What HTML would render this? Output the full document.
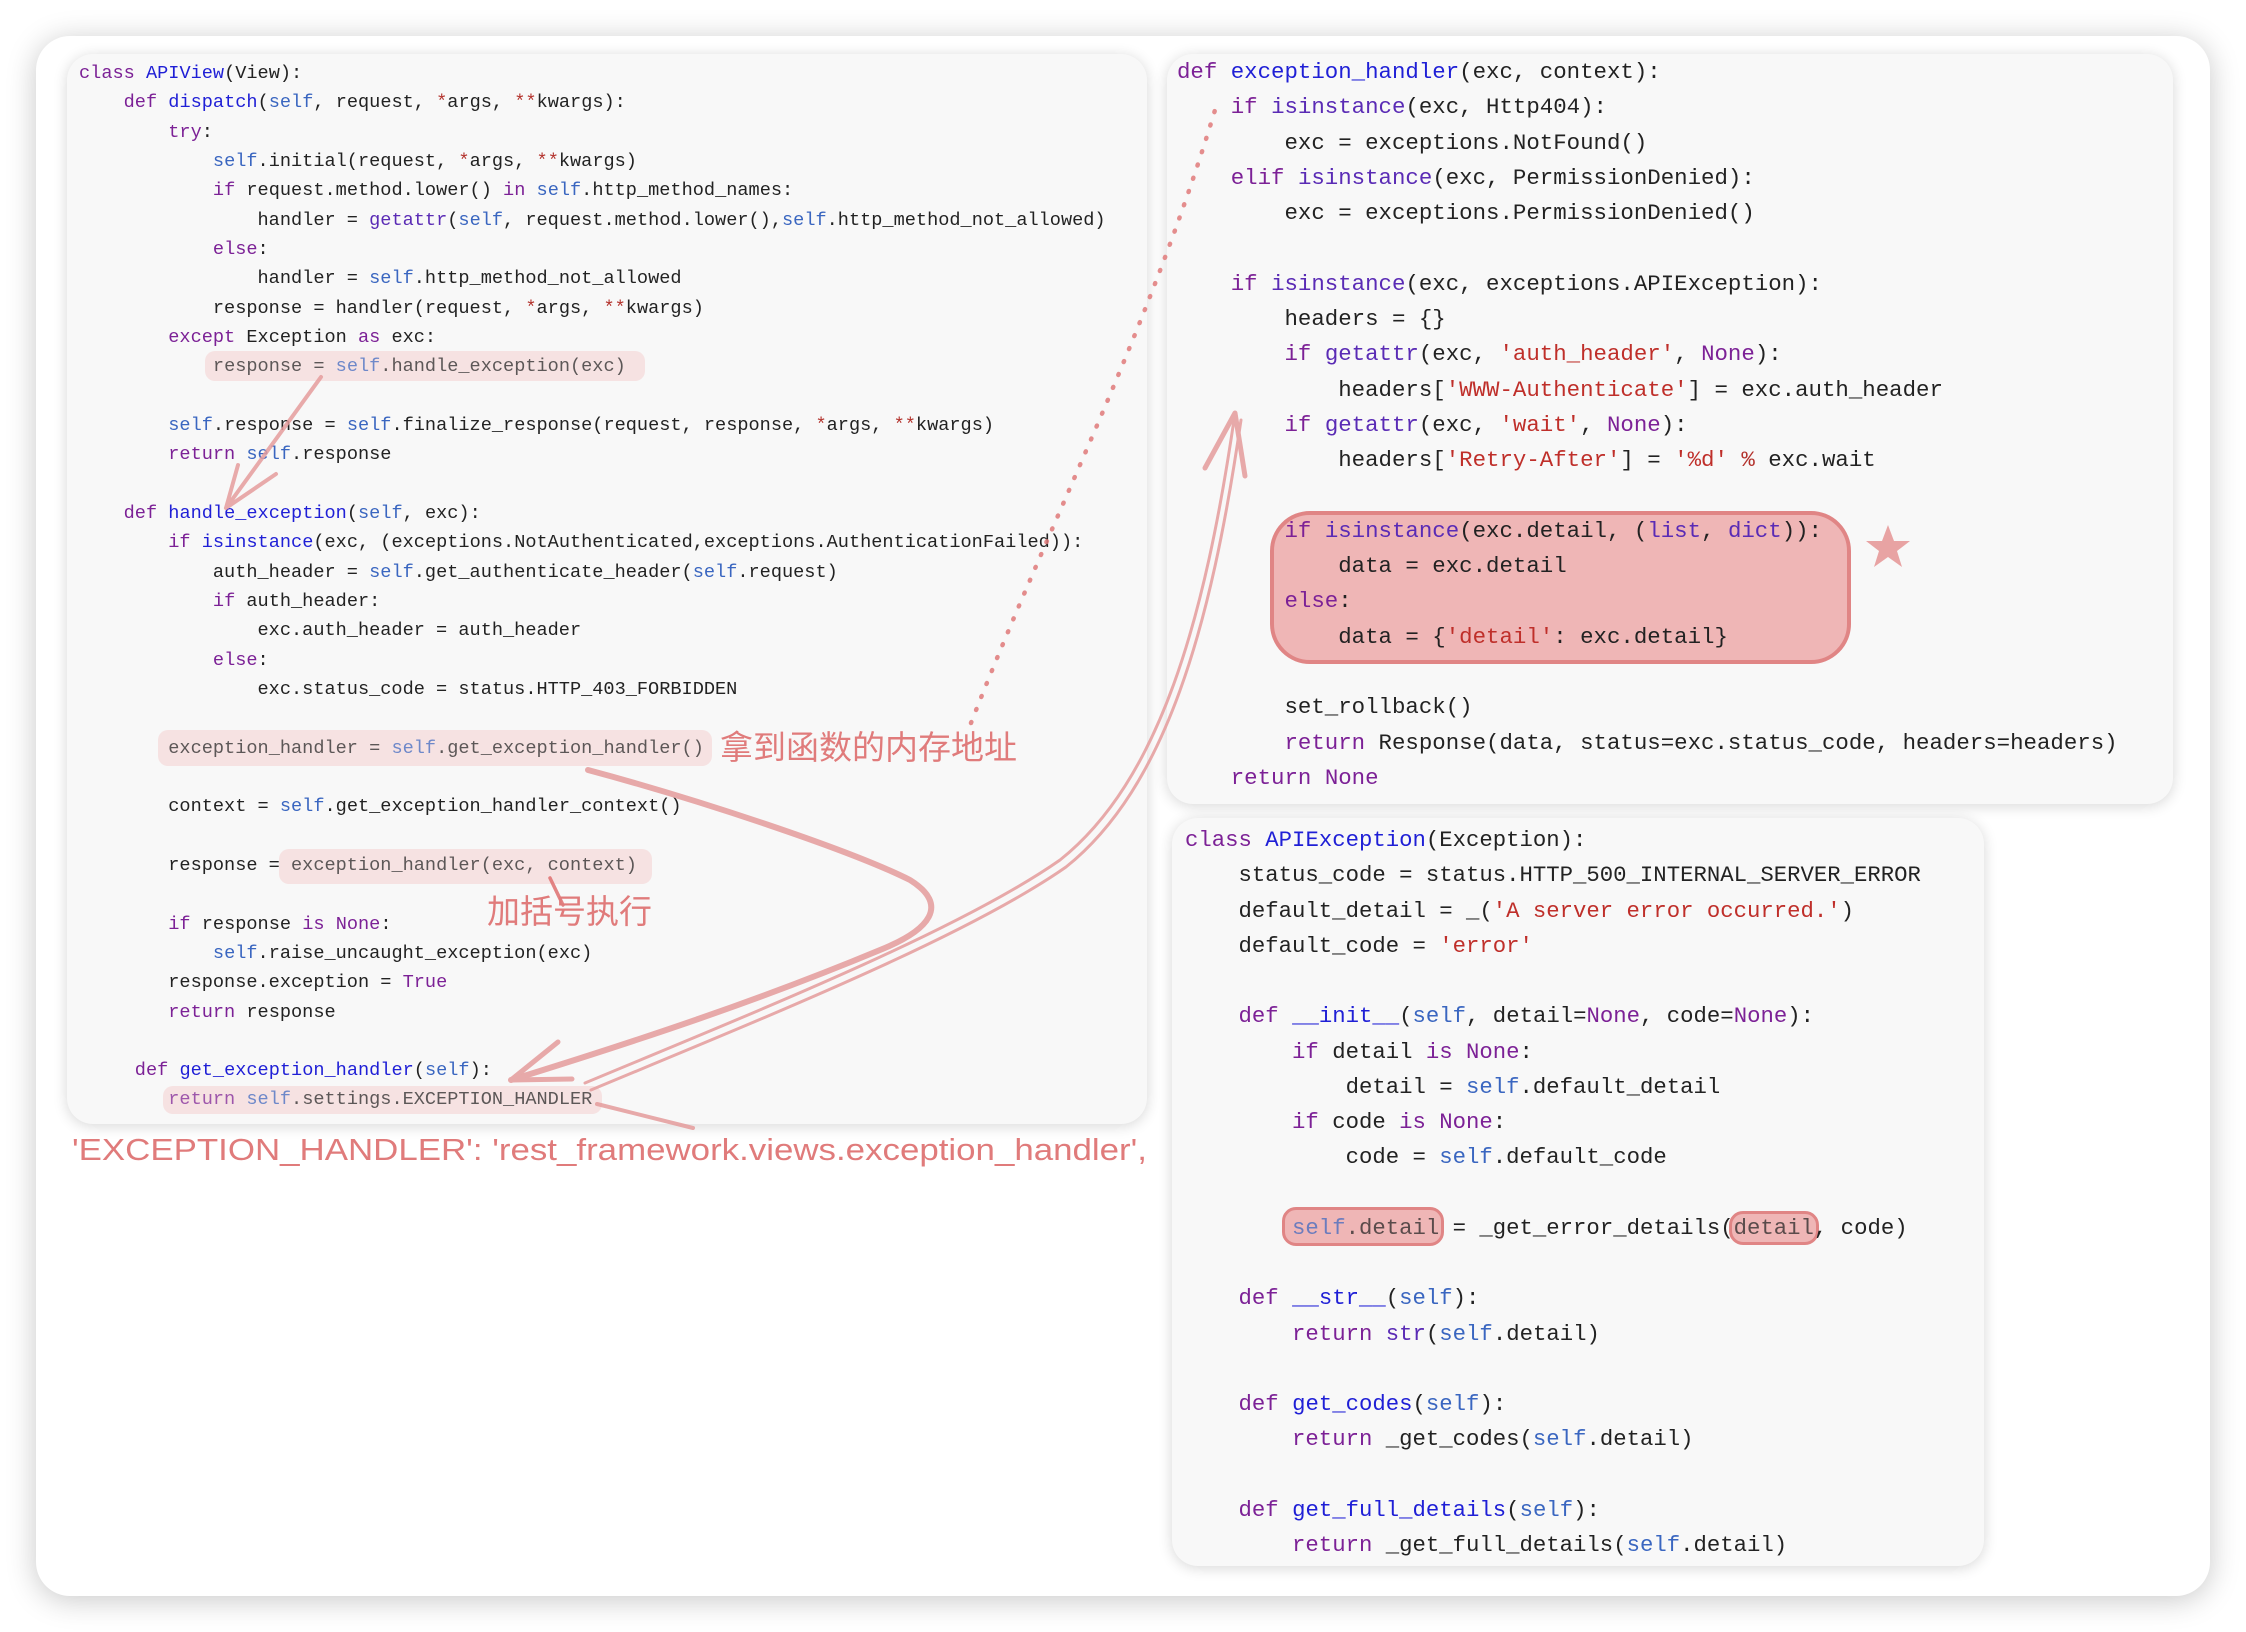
<!DOCTYPE html>
<html><head><meta charset="utf-8">
<style>
html,body{margin:0;padding:0;width:2246px;height:1632px;background:#fff;overflow:hidden}
.card{position:absolute;left:36px;top:36px;width:2174px;height:1560px;background:#fff;border-radius:34px;box-shadow:0 4px 30px rgba(0,0,0,.22)}
.panel{position:absolute;background:#f8f8f8;border-radius:26px;box-shadow:0 2px 14px rgba(0,0,0,.16)}
pre{position:absolute;margin:0;font-family:"Liberation Mono",monospace;color:#222;white-space:pre}
.L{left:79px;top:59px;font-size:18.6px;line-height:29.33px}
.R{left:1177px;top:55px;font-size:22.4px;line-height:35.3px}
.B{left:1185px;top:823px;font-size:22.3px;line-height:35.25px}
.k{color:#7c2196}.f{color:#1f1fd6}.b{color:#5a2bb5}.s{color:#3a66c0}.t{color:#bf2f2a}.o{color:#b3322c}
.dim{opacity:.72}
.hl{position:absolute;background:#f6e2e2;border-radius:10px}
.box{position:absolute;background:#efb6b6;border:3px solid #e08585;border-radius:14px;box-sizing:border-box}
</style></head><body>
<div class="card"></div>
<div class="panel" style="left:67px;top:54px;width:1080px;height:1070px"></div>
<div class="panel" style="left:1167px;top:54px;width:1006px;height:750px"></div>
<div class="panel" style="left:1172px;top:818px;width:812px;height:748px"></div>

<div class="hl" style="left:205px;top:351px;width:440px;height:30px"></div>
<div class="hl" style="left:158px;top:730px;width:554px;height:36px"></div>
<div class="hl" style="left:279px;top:849px;width:373px;height:35px"></div>
<div class="hl" style="left:163px;top:1086px;width:439px;height:28px"></div>

<div class="box" style="left:1270px;top:511px;width:581px;height:153px;border-radius:40px;border-width:4px"></div>
<div class="box" style="left:1282px;top:1207px;width:162px;height:39px"></div>
<div class="box" style="left:1729px;top:1211px;width:90px;height:34px"></div>

<pre class="L"><span class="k">class</span> <span class="f">APIView</span>(View):
    <span class="k">def</span> <span class="f">dispatch</span>(<span class="s">self</span>, request, <span class="o">*</span>args, <span class="o">**</span>kwargs):
        <span class="k">try</span>:
            <span class="s">self</span>.initial(request, <span class="o">*</span>args, <span class="o">**</span>kwargs)
            <span class="k">if</span> request.method.lower() <span class="k">in</span> <span class="s">self</span>.http_method_names:
                handler = <span class="b">getattr</span>(<span class="s">self</span>, request.method.lower(),<span class="s">self</span>.http_method_not_allowed)
            <span class="k">else</span>:
                handler = <span class="s">self</span>.http_method_not_allowed
            response = handler(request, <span class="o">*</span>args, <span class="o">**</span>kwargs)
        <span class="k">except</span> Exception <span class="k">as</span> exc:
            <span class="dim">response = <span class="s">self</span>.handle_exception(exc)</span>

        <span class="s">self</span>.response = <span class="s">self</span>.finalize_response(request, response, <span class="o">*</span>args, <span class="o">**</span>kwargs)
        <span class="k">return</span> <span class="s">self</span>.response

    <span class="k">def</span> <span class="f">handle_exception</span>(<span class="s">self</span>, exc):
        <span class="k">if</span> <span class="f">isinstance</span>(exc, (exceptions.NotAuthenticated,exceptions.AuthenticationFailed)):
            auth_header = <span class="s">self</span>.get_authenticate_header(<span class="s">self</span>.request)
            <span class="k">if</span> auth_header:
                exc.auth_header = auth_header
            <span class="k">else</span>:
                exc.status_code = status.HTTP_403_FORBIDDEN

        <span class="dim">exception_handler = <span class="s">self</span>.get_exception_handler()</span>

        context = <span class="s">self</span>.get_exception_handler_context()

        response = <span class="dim">exception_handler(exc, context)</span>

        <span class="k">if</span> response <span class="k">is</span> <span class="k">None</span>:
            <span class="s">self</span>.raise_uncaught_exception(exc)
        response.exception = <span class="k">True</span>
        <span class="k">return</span> response

     <span class="k">def</span> <span class="f">get_exception_handler</span>(<span class="s">self</span>):
        <span class="dim"><span class="k">return</span> <span class="s">self</span>.settings.EXCEPTION_HANDLER</span></pre>

<pre class="R"><span class="k">def</span> <span class="f">exception_handler</span>(exc, context):
    <span class="k">if</span> <span class="b">isinstance</span>(exc, Http404):
        exc = exceptions.NotFound()
    <span class="k">elif</span> <span class="b">isinstance</span>(exc, PermissionDenied):
        exc = exceptions.PermissionDenied()

    <span class="k">if</span> <span class="b">isinstance</span>(exc, exceptions.APIException):
        headers = {}
        <span class="k">if</span> <span class="b">getattr</span>(exc, <span class="t">'auth_header'</span>, <span class="k">None</span>):
            headers[<span class="t">'WWW-Authenticate'</span>] = exc.auth_header
        <span class="k">if</span> <span class="b">getattr</span>(exc, <span class="t">'wait'</span>, <span class="k">None</span>):
            headers[<span class="t">'Retry-After'</span>] = <span class="t">'%d'</span> <span class="o">%</span> exc.wait

        <span class="k">if</span> <span class="b">isinstance</span>(exc.detail, (<span class="b">list</span>, <span class="b">dict</span>)):
            data = exc.detail
        <span class="k">else</span>:
            data = {<span class="t">'detail'</span>: exc.detail}

        set_rollback()
        <span class="k">return</span> Response(data, status=exc.status_code, headers=headers)
    <span class="k">return</span> <span class="k">None</span></pre>

<pre class="B"><span class="k">class</span> <span class="f">APIException</span>(Exception):
    status_code = status.HTTP_500_INTERNAL_SERVER_ERROR
    default_detail = _(<span class="t">'A server error occurred.'</span>)
    default_code = <span class="t">'error'</span>

    <span class="k">def</span> <span class="f">__init__</span>(<span class="s">self</span>, detail=<span class="k">None</span>, code=<span class="k">None</span>):
        <span class="k">if</span> detail <span class="k">is</span> <span class="k">None</span>:
            detail = <span class="s">self</span>.default_detail
        <span class="k">if</span> code <span class="k">is</span> <span class="k">None</span>:
            code = <span class="s">self</span>.default_code

        <span class="dim"><span class="s">self</span>.detail</span> = _get_error_details(<span class="dim">detail</span>, code)

    <span class="k">def</span> <span class="f">__str__</span>(<span class="s">self</span>):
        <span class="k">return</span> <span class="b">str</span>(<span class="s">self</span>.detail)

    <span class="k">def</span> <span class="f">get_codes</span>(<span class="s">self</span>):
        <span class="k">return</span> _get_codes(<span class="s">self</span>.detail)

    <span class="k">def</span> <span class="f">get_full_details</span>(<span class="s">self</span>):
        <span class="k">return</span> _get_full_details(<span class="s">self</span>.detail)</pre>

<svg width="2246" height="1632" style="position:absolute;left:0;top:0" xmlns="http://www.w3.org/2000/svg">
<g fill="none" stroke="#e59c9c" stroke-linecap="round" stroke-linejoin="round" opacity=".85">
 <path d="M971 723 C1050 520 1150 330 1218 100" stroke="#e07a7a" stroke-width="4.5" stroke-dasharray="1 13"/>
 <path d="M321 377 L226 508 M226 508 L276 474 M226 508 L238 465" stroke-width="4"/>
 <path d="M588 770 C700 800 850 850 910 880 C950 905 930 930 880 950 C760 1000 640 1040 511 1080" stroke-width="6"/>
 <path d="M511 1080 L558 1042 M511 1080 L572 1079" stroke-width="5"/>
 <path d="M585 1083 C760 1010 960 930 1060 860 C1160 780 1205 620 1235 413" stroke-width="3"/>
 <path d="M591 1090 C766 1017 966 937 1066 867 C1166 787 1211 627 1241 420" stroke-width="3"/>
 <path d="M1235 413 L1205 468 M1235 413 L1245 476" stroke-width="5"/>
 <path d="M597 1104 L693 1128" stroke-width="4"/>
 <path d="M550 878 L563 905" stroke="#df7070" stroke-width="3.5"/>
</g>
<polygon points="1888,525 1894,541 1910,541 1897,551 1902,567 1888,557 1874,567 1879,551 1866,541 1882,541" fill="#e8a3a3"/>
<text x="720" y="759" font-family="'Liberation Sans','Noto Sans CJK SC',sans-serif" font-size="33" fill="#e07b7b">拿到函数的内存地址</text>
<text x="487" y="923" font-family="'Liberation Sans','Noto Sans CJK SC',sans-serif" font-size="33" fill="#e07b7b">加括号执行</text>
<text x="72" y="1160" font-family="'Liberation Sans Narrow','Liberation Sans',sans-serif" font-size="31" fill="#e07b7b" textLength="1075" lengthAdjust="spacingAndGlyphs">'EXCEPTION_HANDLER': 'rest_framework.views.exception_handler',</text>
</svg>
</body></html>
